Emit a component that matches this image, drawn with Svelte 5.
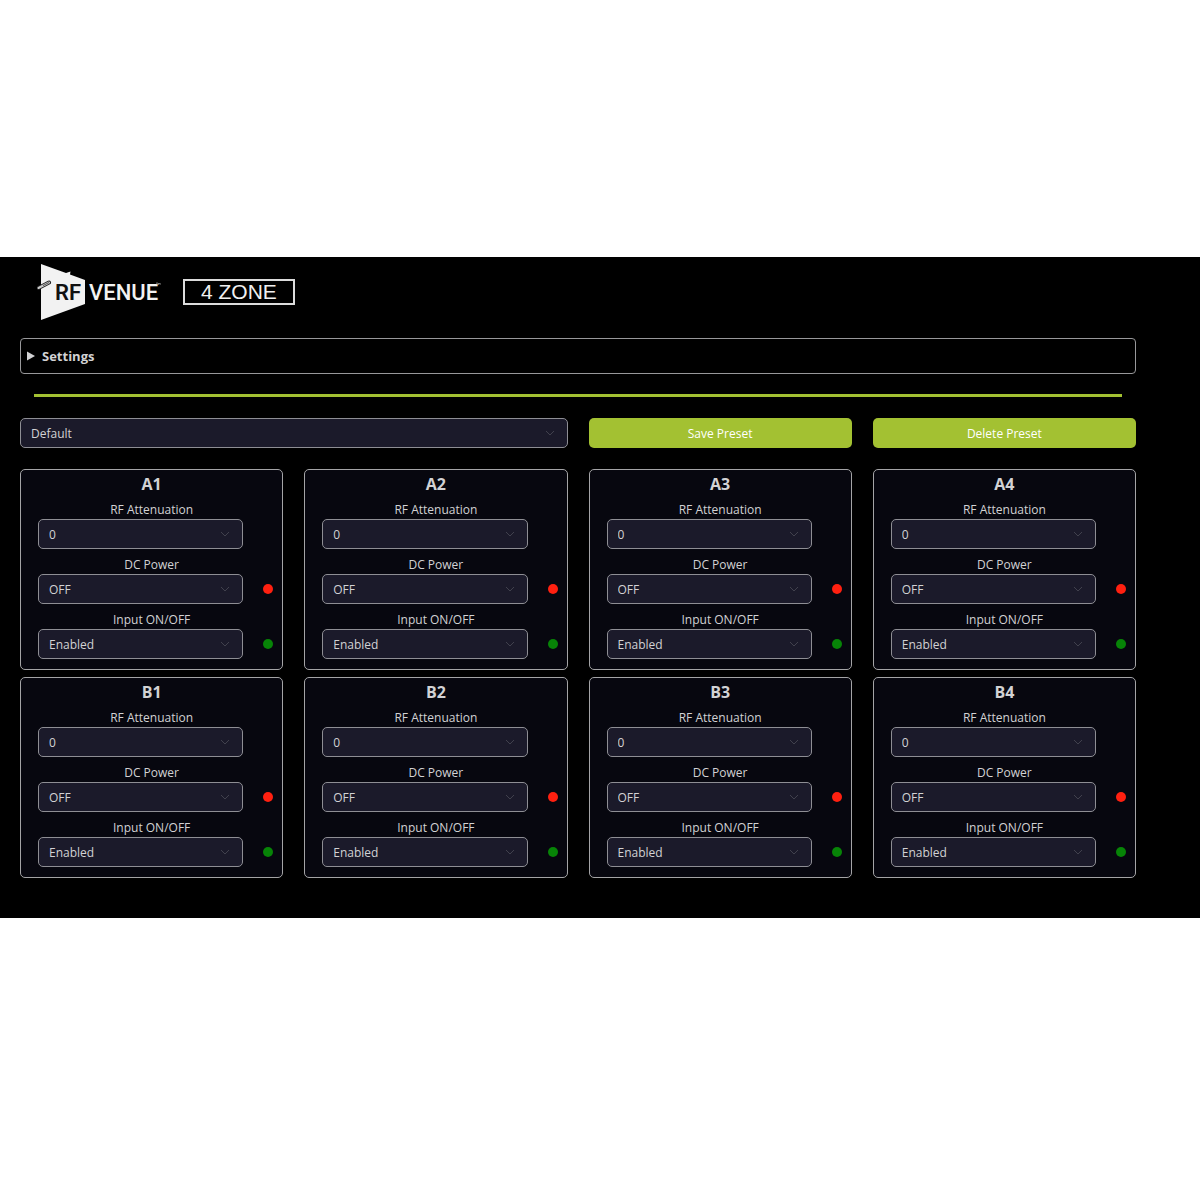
<script lang="ts">
	const channels = ['A1', 'A2', 'A3', 'A4', 'B1', 'B2', 'B3', 'B4'];
	const presets = ['Default'];

	const fields = [
		{ key: 'attenuation', label: 'RF Attenuation', options: ['0', '-3', '-6', '-9'] },
		{ key: 'power', label: 'DC Power', options: ['OFF', 'ON'] },
		{ key: 'input', label: 'Input ON/OFF', options: ['Enabled', 'Disabled'] }
	];

	let preset = $state('Default');
	let zones = $state(
		channels.map((name) => ({
			name,
			values: { attenuation: '0', power: 'OFF', input: 'Enabled' } as Record<string, string>
		}))
	);

	function light(key: string, value: string) {
		if (key === 'attenuation') return 'none';
		return value === 'ON' || value === 'Enabled' ? 'green' : 'red';
	}
</script>

{#snippet chevron()}
	<svg class="chevron" viewBox="0 0 12 12" aria-hidden="true">
		<path d="M2 4 6 8 10 4" />
	</svg>
{/snippet}

<main>
	<header>
		<svg class="logo" viewBox="0 0 124 58" role="img" aria-label="RF Venue">
			<path class="shape" d="M4 1 29 10 33.5 8.5 33 11.5 48 17V41L4 57Z" />
			<path class="rod-edge" d="M1.5 25 12 19.5" />
			<path class="rod" d="M1.5 25 12 19.5" />
			<path class="rod-core" d="M6 22.6 12 19.5" />
			<text class="dark" x="18" y="37">RF</text>
			<text x="52" y="37">VENUE</text>
			<path class="tm" d="M119 20h2M120 20v2M121.5 22v-2l.8 1 .8-1v2" />
		</svg>
		<h1>4 ZONE</h1>
	</header>

	<details>
		<summary>
			<svg class="marker" viewBox="0 0 8 10" aria-hidden="true"><path d="M0 0.5 8 5 0 9.5Z" /></svg>
			Settings
		</summary>
	</details>

	<hr />

	<div class="grid presets">
		<div class="select wide">
			<select aria-label="Preset" bind:value={preset}>
				{#each presets as name}
					<option>{name}</option>
				{/each}
			</select>
			{@render chevron()}
		</div>
		<button type="button">Save Preset</button>
		<button type="button">Delete Preset</button>
	</div>

	<div class="grid">
		{#each zones as zone}
			<section>
				<h2>{zone.name}</h2>
				{#each fields as field}
					<div class="field">
						<label for={`${zone.name}-${field.key}`}>{field.label}</label>
						<div class="row">
							<div class="select">
								<select id={`${zone.name}-${field.key}`} bind:value={zone.values[field.key]}>
									{#each field.options as option}
										<option>{option}</option>
									{/each}
								</select>
								{@render chevron()}
							</div>
							<span class={`dot ${light(field.key, zone.values[field.key])}`}></span>
						</div>
					</div>
				{/each}
			</section>
		{/each}
	</div>
</main>

<style>
	:global(body) {
		margin: 0;
		background: #fff;
	}

	main {
		margin-top: 257px;
		padding: 6px 64px 40px 20px;
		background: #000;
		color: #d2d2d4;
		font: 12px/18px "Open Sans", "Noto Sans", sans-serif;
	}

	header {
		display: flex;
		align-items: center;
		gap: 22px;
		padding-left: 17px;
	}

	.logo {
		width: 124px;
		height: 58px;
	}

	.shape {
		fill: #f2f2f2;
	}

	.rod-edge {
		stroke: #222;
		stroke-width: 4;
		stroke-linecap: round;
	}

	.rod {
		stroke: #ccc;
		stroke-width: 2;
		stroke-linecap: round;
	}

	.rod-core {
		stroke: #555;
		stroke-width: 1;
	}

	.logo text {
		font-family: Roboto, sans-serif;
		font-size: 22px;
		font-weight: 500;
		fill: #f2f2f2;
	}

	.logo .dark {
		font-weight: 600;
		fill: #111;
	}

	.tm {
		fill: none;
		stroke: #aaa;
		stroke-width: 0.6;
	}

	h1 {
		margin: 0;
		padding: 0 16px;
		border: 2px solid #dcdcdc;
		color: #f0f0f0;
		font: 21px/22px "Liberation Sans", Arial, sans-serif;
	}

	details {
		margin-top: 17px;
		border: 1px solid #98989a;
		border-radius: 4px;
	}

	summary {
		display: flex;
		align-items: center;
		gap: 7px;
		padding: 8px 6px;
		font-size: 13px;
		font-weight: 700;
		cursor: pointer;
	}

	.marker {
		width: 8px;
		height: 10px;
		fill: #d2d2d4;
	}

	hr {
		height: 3px;
		margin: 20px 14px 21px;
		border: 0;
		background: #a3c132;
	}

	.grid {
		display: grid;
		grid-template-columns: repeat(4, 1fr);
		gap: 7px 21px;
	}

	.presets {
		margin-bottom: 21px;
	}

	.wide {
		grid-column: span 2;
	}

	section {
		padding: 1px 0 10px;
		border: 1px solid #a4a4a6;
		border-radius: 5px;
		background: #07070f;
	}

	h2 {
		margin: 0 0 4px;
		font-size: 16px;
		font-weight: 700;
		line-height: 26px;
		text-align: center;
	}

	.field + .field {
		margin-top: 7px;
	}

	label {
		display: block;
		text-align: center;
	}

	.row {
		display: flex;
		align-items: center;
		gap: 20px;
		padding: 0 9px 0 17px;
	}

	.select {
		position: relative;
		flex: 1;
	}

	select {
		display: block;
		box-sizing: border-box;
		width: 100%;
		height: 30px;
		padding: 2px 10px 0;
		appearance: none;
		border: 1px solid #8e8e94;
		border-radius: 5px;
		background: #1b1a2a;
		color: inherit;
		font: inherit;
	}

	.chevron {
		position: absolute;
		top: 9px;
		right: 12px;
		width: 12px;
		height: 12px;
		fill: none;
		stroke: #41414d;
		pointer-events: none;
	}

	.dot {
		width: 10px;
		height: 10px;
		border-radius: 50%;
	}

	.red {
		background: #ff2010;
	}

	.green {
		background: #078407;
	}

	button {
		height: 30px;
		padding: 2px 10px 0;
		border: 0;
		border-radius: 5px;
		background: #a3c132;
		color: #fff;
		font: inherit;
		cursor: pointer;
	}
</style>
